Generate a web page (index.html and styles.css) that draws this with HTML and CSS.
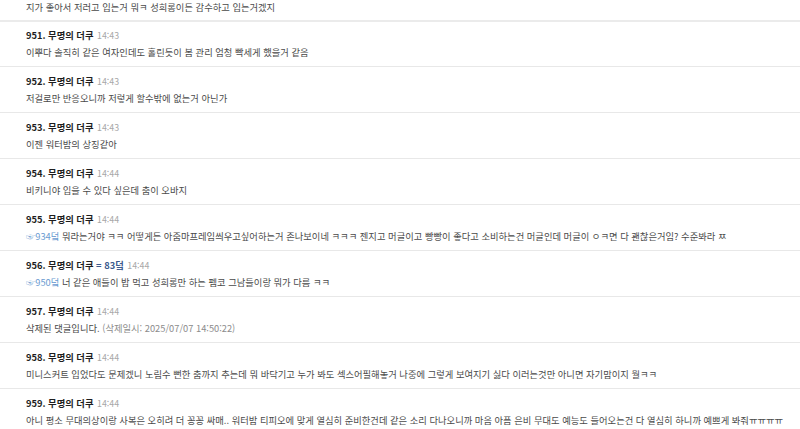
FILE: index.html
```html
<!DOCTYPE html>
<html lang="ko">

<head>
    <meta charset="UTF-8">
    <meta name="viewport" content="width=device-width, initial-scale=1.0">
    <title>더쿠 댓글</title>
    <link rel="stylesheet" href="styles.css">
</head>

<body>
    <ul class="comment-list">
        <li class="comment continued">
            <p class="comment-text">지가 좋아서 저러고 입는거 뭐ㅋ 성희롱이든 감수하고 입는거겠지</p>
        </li>
        <li class="comment first-visible">
            <div class="comment-head"><span class="name">951. 무명의 더쿠</span> <span class="time">14:43</span></div>
            <p class="comment-text">이뿌다 솔직히 같은 여자인데도 홀린듯이 봄 관리 엄청 빡세게 했을거 같음</p>
        </li>
        <li class="comment">
            <div class="comment-head"><span class="name">952. 무명의 더쿠</span> <span class="time">14:43</span></div>
            <p class="comment-text">저걸로만 반응오니까 저렇게 할수밖에 없는거 아닌가</p>
        </li>
        <li class="comment">
            <div class="comment-head"><span class="name">953. 무명의 더쿠</span> <span class="time">14:43</span></div>
            <p class="comment-text">이젠 워터밤의 상징같아</p>
        </li>
        <li class="comment">
            <div class="comment-head"><span class="name">954. 무명의 더쿠</span> <span class="time">14:44</span></div>
            <p class="comment-text">비키니야 입을 수 있다 싶은데 춤이 오바지</p>
        </li>
        <li class="comment">
            <div class="comment-head"><span class="name">955. 무명의 더쿠</span> <span class="time">14:44</span></div>
            <p class="comment-text"><a href="#" class="anchor">☞934덬</a> 뭐라는거야 ㅋㅋ 어떻게든 아줌마프레임씌우고싶어하는거 존나보이네 ㅋㅋㅋ 젠지고 머글이고 빵빵이 좋다고 소비하는건 머글인데 머글이 ㅇㅋ면 다 괜찮은거임? 수준봐라 ㅉ</p>
        </li>
        <li class="comment">
            <div class="comment-head"><span class="name">956. 무명의 더쿠</span> <span class="same">= 83덬</span> <span class="time">14:44</span></div>
            <p class="comment-text"><a href="#" class="anchor">☞950덬</a> 너 같은 애들이 밥 먹고 성희롱만 하는 펨코 그남들이랑 뭐가 다름 ㅋㅋ</p>
        </li>
        <li class="comment">
            <div class="comment-head"><span class="name">957. 무명의 더쿠</span> <span class="time">14:44</span></div>
            <p class="comment-text">삭제된 댓글입니다. <span class="deleted">(삭제일시: 2025/07/07 14:50:22)</span></p>
        </li>
        <li class="comment">
            <div class="comment-head"><span class="name">958. 무명의 더쿠</span> <span class="time">14:44</span></div>
            <p class="comment-text">미니스커트 입었다도 문제겠니 노림수 뻔한 춤까지 추는데 뭐 바닥기고 누가 봐도 섹스어필해놓거 나중에 그렇게 보여지기 싫다 이러는것만 아니면 자기맘이지 뭘ㅋㅋ</p>
        </li>
        <li class="comment">
            <div class="comment-head"><span class="name">959. 무명의 더쿠</span> <span class="time">14:44</span></div>
            <p class="comment-text">아니 평소 무대의상이랑 사복은 오히려 더 꽁꽁 싸매.. 워터밤 티피오에 맞게 열심히 준비한건데 같은 소리 다나오니까 마음 아픔 은비 무대도 예능도 들어오는건 다 열심히 하니까 예쁘게 봐줘ㅠㅠㅠㅠ</p>
        </li>
    </ul>
</body>

</html>
```

FILE: styles.css
```css
body {
    font-family: "Noto Sans CJK KR", "Noto Sans", sans-serif;
    margin: 0;
    padding: 0;
    background-color: #ffffff;
    color: #4a4a4a;
    overflow: hidden;
}

.comment-list {
    list-style-type: none;
    margin: 0;
    padding: 0;
}

.comment {
    border-top: 1px solid #e8e8e8;
    padding: 6px 26px 6px;
    white-space: nowrap;
}

.continued {
    border-top: none;
    padding-top: 0;
}

.continued .comment-text {
    margin-top: 0;
    line-height: 14px;
    height: 14px;
}

.first-visible {
    border-top: 2px solid #ebebeb;
    padding-top: 5px;
}

.comment-head {
    font-size: 9.3px;
    line-height: 16px;
    height: 16px;
}

.name {
    font-weight: bold;
    color: #1e1e1e;
}

.same {
    font-weight: bold;
    color: #3b5a8e;
}

.time {
    color: #a8a8a8;
    font-size: 8.8px;
    margin-left: 1px;
}

.comment-text {
    margin: 1px 0 0 0;
    font-size: 9.3px;
    line-height: 16px;
    height: 16px;
}

.anchor {
    color: #6a9bd1;
    text-decoration: none;
}

.deleted {
    color: #8c8c8c;
}
```
